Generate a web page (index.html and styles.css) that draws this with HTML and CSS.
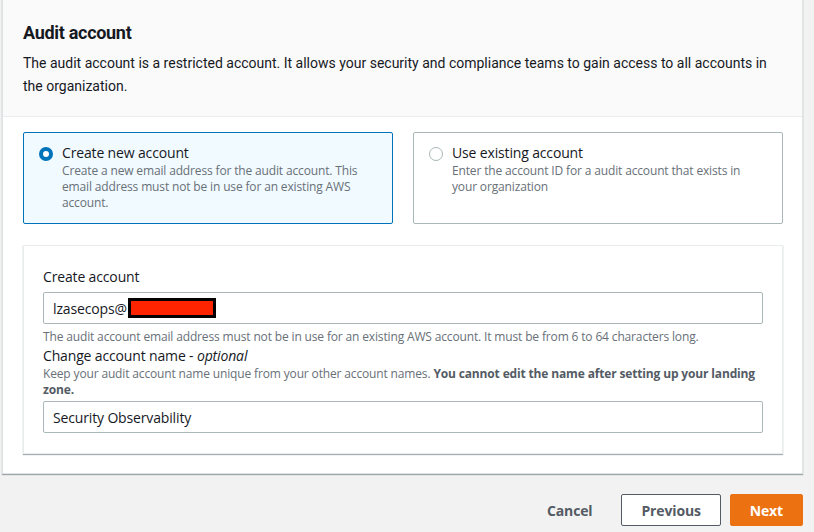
FILE: index.html
```html
<!DOCTYPE html>
<html>
<head>
<meta charset="utf-8">
<link rel="stylesheet" href="styles.css">
</head>
<body>
<div class="page">
  <section class="card">
    <header class="card-header">
      <h2 class="title">Audit account</h2>
      <p class="intro">The audit account is a restricted account. It allows your security and compliance teams to gain access to all accounts in the organization.</p>
    </header>
    <div class="card-body">
      <div class="tiles">
        <label class="tile tile-selected">
          <span class="radio radio-on"></span>
          <span class="tile-text">
            <span class="tile-label">Create new account</span>
            <span class="tile-desc">Create a new email address for the audit account. This email address must not be in use for an existing AWS account.</span>
          </span>
        </label>
        <label class="tile">
          <span class="radio"></span>
          <span class="tile-text">
            <span class="tile-label">Use existing account</span>
            <span class="tile-desc">Enter the account ID for a audit account that exists in your organization</span>
          </span>
        </label>
      </div>
      <div class="panel">
        <div class="field-label">Create account</div>
        <div class="input">lzasecops@<span class="redact"></span></div>
        <div class="hint">The audit account email address must not be in use for an existing AWS account. It must be from 6 to 64 characters long.</div>
        <div class="field-label second">Change account name - <em>optional</em></div>
        <div class="desc">Keep your audit account name unique from your other account names. <b>You cannot edit the name after setting up your landing zone.</b></div>
        <div class="input">Security Observability</div>
      </div>
    </div>
  </section>
  <div class="actions">
    <button class="btn btn-link">Cancel</button>
    <button class="btn btn-normal">Previous</button>
    <button class="btn btn-primary">Next</button>
  </div>
</div>
</body>
</html>
```
FILE: styles.css
```css
html, body {
  margin: 0;
  padding: 0;
  background: #f2f2f2;
}
body {
  font-family: "Open Sans", "Noto Sans", sans-serif;
  color: #16191f;
  font-size: 14px;
  letter-spacing: -0.15px;
}
.page {
  width: 801px;
  margin-left: 2px;
}
.card {
  margin-top: -1px;
  background: #fff;
  border: 1px solid #dfe3e3;
  box-shadow: 0 1px 1px 0 rgba(0, 28, 36, 0.35);
}
.card-header {
  background: #fafafa;
  border-bottom: 1px solid #eaeded;
  padding: 22px 20px 18px 20px;
}
.title {
  margin: 0;
  font-family: Roboto, "Liberation Sans", sans-serif;
  font-size: 18px;
  line-height: 22px;
  font-weight: 700;
  letter-spacing: -0.3px;
}
.intro {
  margin: 8px 0 0 0;
  font-family: Roboto, "Liberation Sans", sans-serif;
  font-size: 14px;
  line-height: 23px;
  letter-spacing: 0;
}
.card-body {
  padding: 15px 19px 19px 20px;
}
.tiles {
  display: grid;
  grid-template-columns: 370px 370px;
  column-gap: 20px;
}
.tile {
  display: flex;
  align-items: flex-start;
  gap: 9px;
  border: 1px solid #aab7b8;
  border-radius: 2px;
  padding: 10px 14px 12px 15px;
  min-height: 67px;
}
.tile-selected {
  border-color: #0073bb;
  background: #f1faff;
}
.radio {
  flex: none;
  box-sizing: border-box;
  width: 14px;
  height: 14px;
  margin-top: 4px;
  border-radius: 50%;
  border: 1px solid #aab7b8;
  background: #fff;
}
.radio-on {
  border: 4px solid #0073bb;
}
.tile-text {
  display: flex;
  flex-direction: column;
}
.tile-label {
  font-size: 14px;
  line-height: 20px;
}
.tile-desc {
  font-size: 12px;
  line-height: 16px;
  color: #687078;
}
.panel {
  margin-top: 21px;
  border: 1px solid #eaeded;
  box-shadow: 0 1px 1px 0 rgba(0, 28, 36, 0.35);
  padding: 20px 19px 20px 19px;
  display: flex;
  flex-direction: column;
}
.field-label {
  font-size: 14px;
  line-height: 22px;
  margin-bottom: 4px;
}
.field-label.second {
  line-height: 19px;
  margin-top: 1px;
  margin-bottom: 1px;
}
.input {
  box-sizing: border-box;
  height: 32px;
  border: 1px solid #aab7b8;
  border-radius: 2px;
  padding: 0 9px;
  display: flex;
  align-items: center;
  font-size: 14px;
}
.redact {
  display: inline-block;
  box-sizing: border-box;
  width: 88px;
  height: 20px;
  margin-left: 1px;
  background: #ff2400;
  border: 3px solid #000;
}
.hint {
  margin-top: 5px;
  font-size: 12px;
  line-height: 16px;
  color: #687078;
}
.desc {
  font-size: 12px;
  line-height: 16px;
  color: #687078;
  margin-bottom: 3px;
}
.desc b {
  color: #545b64;
}
.actions {
  display: flex;
  justify-content: flex-end;
  align-items: center;
  gap: 9px;
  margin-top: 20px;
}
.btn {
  font-family: "Open Sans", "Noto Sans", sans-serif;
  font-size: 14px;
  font-weight: bold;
  letter-spacing: -0.15px;
  height: 32px;
  border-radius: 2px;
  padding: 0 19px;
  cursor: pointer;
}
.btn-link {
  background: transparent;
  border: 1px solid transparent;
  color: #545b64;
  margin-right: 0;
}
.btn-normal {
  background: #fff;
  border: 1px solid #545b64;
  color: #545b64;
}
.btn-primary {
  background: #ec7211;
  border: 1px solid #ec7211;
  color: #fff;
}
```
